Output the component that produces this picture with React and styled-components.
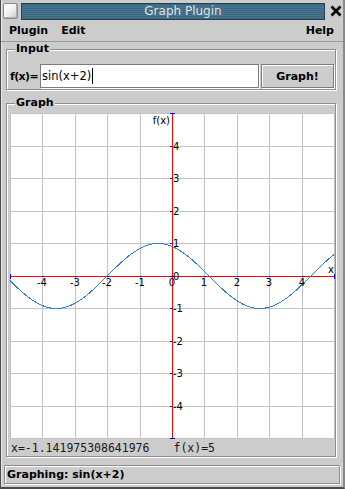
import React from 'react';
import styled, { createGlobalStyle } from 'styled-components';

const GlobalStyle = createGlobalStyle`
  html, body {
    margin: 0;
    padding: 0;
    background: #cccccc;
  }
  body {
    font-family: 'DejaVu Sans', 'Liberation Sans', sans-serif;
    color: #000;
  }
`;

const Window = styled.div`
  width: 345px;
  height: 489px;
  box-sizing: border-box;
  display: flex;
  flex-direction: column;
  background: #cccccc;
  border-left: 1px solid #4a4a4a;
  border-right: 2px solid #8a8a8a;
  border-bottom: 2px solid #4a4a4a;
  box-shadow: inset 1px 0 0 #e8e8e8;
`;

const TitleBar = styled.div`
  display: flex;
  align-items: flex-start;
  height: 20px;
  box-sizing: border-box;
  padding: 3px 0 0 2px;
`;

const WinIcon = styled.div`
  width: 15px;
  height: 16px;
  box-sizing: border-box;
  border: 1px solid #8a8a8a;
  border-radius: 2px;
  background: linear-gradient(135deg, #ffffff 0%, #f2f2f2 50%, #c8c8c8 100%);
  box-shadow: inset -1px -1px 0 #b0b0b0;
`;

const TitleStrip = styled.div`
  width: 304px;
  height: 17px;
  margin-left: 3px;
  box-sizing: border-box;
  border: 1px solid #24404f;
  background: repeating-linear-gradient(
    to bottom,
    #3b6780 0px,
    #3b6780 1px,
    #47768f 1px,
    #47768f 2px
  );
  color: #e2e2e2;
  font-size: 12px;
  line-height: 15px;
  text-align: center;
  padding-left: 20px;
`;

const CloseBox = styled.div`
  width: 14px;
  height: 16px;
  margin-left: 4px;
  display: flex;
  align-items: center;
  justify-content: center;
`;

const MenuBar = styled.div`
  display: flex;
  align-items: center;
  height: 22px;
  box-sizing: border-box;
  padding: 0 9px 1px 8px;
  border-bottom: 1px solid #999999;
  gap: 13px;
`;

const MenuItem = styled.span`
  font-size: 11px;
  font-weight: bold;
  margin-left: ${p => (p.$right ? 'auto' : '0')};
`;

const Group = styled.fieldset`
  margin: ${p => p.$top}px 7px 0 5px;
  padding: ${p => p.$pad};
  border: 1px solid #8e8e8e;
  box-shadow: inset 1px 1px 0 #ffffff, 1px 1px 0 #ffffff;
  min-width: 0;
`;

const GroupTitle = styled.legend`
  margin-left: 5px;
  padding: 0 1px;
  font-size: 11px;
  font-weight: bold;
  line-height: 12px;
  background: #cccccc;
`;

const InputRow = styled.div`
  display: flex;
  align-items: center;
  height: 24px;
`;

const FxLabel = styled.span`
  width: 30px;
  font-size: 11px;
  font-weight: bold;
  letter-spacing: -0.6px;
`;

const TextField = styled.div`
  width: 219px;
  height: 24px;
  box-sizing: border-box;
  display: flex;
  align-items: center;
  padding-left: 1px;
  background: #ffffff;
  border: 1px solid #7c7c7c;
  box-shadow: 1px 1px 0 #ffffff;
  font-size: 11.5px;
`;

const Caret = styled.span`
  display: inline-block;
  width: 1px;
  height: 16px;
  margin-left: 1px;
  background: #000;
`;

const Button = styled.div`
  width: 73px;
  height: 24px;
  margin-left: 2px;
  box-sizing: border-box;
  display: flex;
  align-items: center;
  justify-content: center;
  border: 1px solid #7c7c7c;
  box-shadow: inset 1px 1px 0 #ffffff, 1px 1px 0 #ffffff;
  font-size: 11px;
  font-weight: bold;
`;

const PlotBox = styled.div`
  display: flex;
  height: 326px;
`;

const ReadoutRow = styled.div`
  display: flex;
  align-items: center;
  gap: 24px;
  height: 17px;
  padding-left: 1px;
  font-family: 'DejaVu Sans Mono', 'Liberation Mono', monospace;
  font-size: 11.5px;
  color: #1a1a1a;
`;

const StatusBar = styled.div`
  margin: 8px 3px 0 3px;
  height: 19px;
  box-sizing: border-box;
  display: flex;
  align-items: center;
  padding-left: 2px;
  border: 1px solid #8e8e8e;
  box-shadow: inset 1px 1px 0 #ffffff, 1px 1px 0 #ffffff;
  font-size: 11px;
  font-weight: bold;
`;

const X0 = 162;
const Y0 = 163;
const SX = 32.4;
const SY = 32.5;
const px = u => Math.round(X0 + SX * u) + 0.5;
const py = v => Math.floor(Y0 - SY * v) + 0.5;
const units = [-5, -4, -3, -2, -1, 0, 1, 2, 3, 4, 5];
const labels = [-4, -3, -2, -1, 0, 1, 2, 3, 4];

const curve = [];
for (let i = 0; i <= 324; i++) {
  const u = (i - X0) / SX;
  curve.push(`${i},${(Y0 - SY * Math.sin(u + 2)).toFixed(1)}`);
}

const Plot = () => (
  <svg width="325" height="326" viewBox="0 0 325 326">
    <rect x="0.5" y="0.5" width="324" height="325" fill="#ffffff" />
    <g stroke="#c2c2c2" strokeWidth="1" shapeRendering="crispEdges">
      {units.map(u => (
        <line key={'gx' + u} x1={px(u)} y1="0.5" x2={px(u)} y2="325.5" />
      ))}
      {units.map(v => (
        <line key={'gy' + v} x1="0.5" y1={py(v)} x2="324.5" y2={py(v)} />
      ))}
    </g>
    <g stroke="#ff0000" strokeWidth="1" shapeRendering="crispEdges">
      <line x1="162.5" y1="0.5" x2="162.5" y2="325.5" />
      <line x1="0.5" y1="163.5" x2="324.5" y2="163.5" />
    </g>
    <g stroke="#0000ee" strokeWidth="1" shapeRendering="crispEdges">
      {labels.map(u => (
        <line key={'tx' + u} x1={px(u) - 1} y1="163.5" x2={px(u) + 1} y2="163.5" />
      ))}
      {labels.map(v => (
        <line key={'ty' + v} x1="160" y1={py(v)} x2="162" y2={py(v)} />
      ))}
      <line x1="0.5" y1="161" x2="0.5" y2="166" />
      <line x1="324.5" y1="161" x2="324.5" y2="166" />
      <line x1="160" y1="0.5" x2="165" y2="0.5" />
      <line x1="160" y1="325.5" x2="165" y2="325.5" />
    </g>
    <polyline
      points={curve.join(' ')}
      fill="none"
      stroke="#2f7fd2"
      strokeWidth="1"
      shapeRendering="crispEdges"
    />
    <g fontFamily="'DejaVu Sans', sans-serif" fontSize="10" fill="#000">
      {labels.map(u => (
        <text key={'lx' + u} x={px(u) - 0.5} y={Y0 + 10} textAnchor="middle">
          {u}
        </text>
      ))}
      {labels.map(v => (
        <text key={'ly' + v} x={X0 + 1} y={py(v) + 3}>
          {v}
        </text>
      ))}
      <text x={X0 - 2} y="11" textAnchor="end">f(x)</text>
      <text x="318" y="160">x</text>
    </g>
  </svg>
);

const CloseIcon = () => (
  <svg width="12" height="12" viewBox="0 0 12 12">
    <path d="M1.5 1.5 L10.5 10.5 M10.5 1.5 L1.5 10.5" stroke="#000" strokeWidth="2.6" />
  </svg>
);

export default function App() {
  return (
    <>
      <GlobalStyle />
      <Window>
        <TitleBar>
          <WinIcon />
          <TitleStrip>Graph Plugin</TitleStrip>
          <CloseBox>
            <CloseIcon />
          </CloseBox>
        </TitleBar>
        <MenuBar>
          <MenuItem>Plugin</MenuItem>
          <MenuItem>Edit</MenuItem>
          <MenuItem $right>Help</MenuItem>
        </MenuBar>
        <Group $top={1} $pad="9px 1px 1px 3px">
          <GroupTitle>Input</GroupTitle>
          <InputRow>
            <FxLabel>f(x)=</FxLabel>
            <TextField>
              sin(x+2)
              <Caret />
            </TextField>
            <Button>Graph!</Button>
          </InputRow>
        </Group>
        <Group $top={7} $pad="4px 0 0 3px">
          <GroupTitle>Graph</GroupTitle>
          <PlotBox>
            <Plot />
          </PlotBox>
          <ReadoutRow>
            <span>x=-1.141975308641976</span>
            <span>f(x)=5</span>
          </ReadoutRow>
        </Group>
        <StatusBar>Graphing: sin(x+2)</StatusBar>
      </Window>
    </>
  );
}
